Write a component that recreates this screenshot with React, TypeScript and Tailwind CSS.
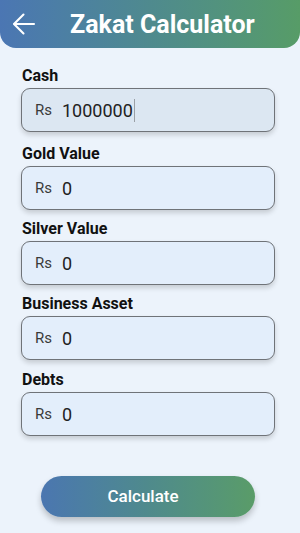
import React from "react";

const font = { fontFamily: "Roboto, 'Noto Sans', sans-serif" };

function Field({ label, value, focused, className = "" }: { label: string; value: string; focused?: boolean; className?: string }) {
  return (
    <div className={"flex flex-col " + className}>
      <div className="h-[20px] leading-[20px] text-[16px] font-bold text-[#111111] pl-[1px]">{label}</div>
      <div
        className={
          "mt-[2px] h-[44px] rounded-[9px] border border-[#6f7378] flex items-center pl-[13px] shadow-[0_3px_5px_rgba(0,0,0,0.16)] " +
          (focused ? "bg-[#dce7f2]" : "bg-[#e3eefb]")
        }
      >
        <span className="text-[15px] text-[#3a3a3a]">Rs</span>
        <span className="ml-[10px] text-[18px] text-[#222222]">{value}</span>
        {focused && <span className="ml-[1px] w-[1px] h-[23px] bg-[#9aa0a6]" />}
      </div>
    </div>
  );
}

export default function App() {
  return (
    <div className="w-[300px] h-[533px] bg-[#ecf3fb] flex flex-col overflow-hidden" style={font}>
      <div className="h-[48px] rounded-b-[16px] bg-gradient-to-r from-[#4b76b3] via-[#4f8a8e] to-[#579c67] flex items-center shrink-0">
        <svg width="24" height="24" viewBox="0 0 24 24" className="ml-[12px] mt-[-1px]" fill="none" stroke="white" strokeWidth="2.1" strokeLinecap="round" strokeLinejoin="round">
          <path d="M22 12H2.5" />
          <path d="M11.5 2.5L2 12l9.5 9.5" />
        </svg>
        <div className="ml-[34px] text-white font-bold text-[25px] leading-none mt-[1px]">Zakat Calculator</div>
      </div>
      <div className="flex flex-col px-[21px] pt-[18px] pr-[25px]">
        <Field label="Cash" value="1000000" focused className="mb-[12px]" />
        <Field label="Gold Value" value="0" className="mb-[9px]" />
        <Field label="Silver Value" value="0" className="mb-[9px]" />
        <Field label="Business Asset" value="0" className="mb-[10px]" />
        <Field label="Debts" value="0" />
      </div>
      <div className="mt-[40px] ml-[41px] w-[214px] h-[41px] rounded-full bg-gradient-to-r from-[#4b76b0] via-[#4f8a8c] to-[#5a9c68] flex items-center justify-center pr-[10px] shadow-[0_4px_6px_rgba(0,0,0,0.22)]">
        <span className="text-white text-[17px] font-medium">Calculate</span>
      </div>
    </div>
  );
}
